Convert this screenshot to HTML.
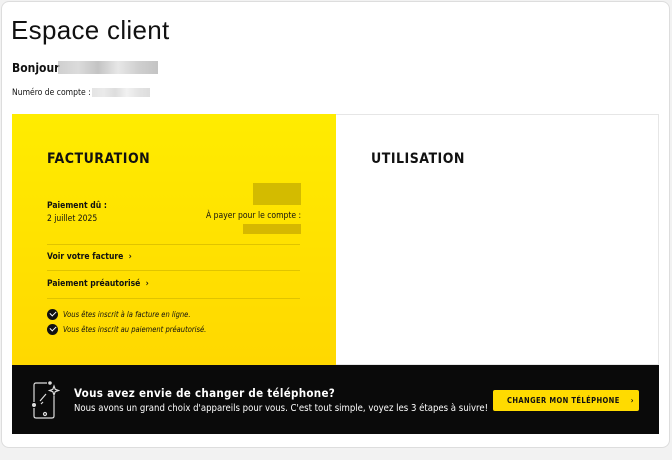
<!DOCTYPE html>
<html><head><meta charset="utf-8"><style>
*{margin:0;padding:0;box-sizing:border-box}
body{width:672px;height:460px;background:#f2f2f2;font-family:"DejaVu Sans Condensed","Liberation Sans",sans-serif;color:#111;position:relative;overflow:hidden}
.card{position:absolute;left:1px;top:1px;width:669px;height:447px;background:#fff;border:1px solid #ddd;border-radius:8px}
.abs{position:absolute}
h1{position:absolute;left:11px;top:15px;font-weight:normal;font-size:26px;font-family:"Liberation Sans",sans-serif;color:#111;letter-spacing:0.3px}
.blur{position:absolute;background:linear-gradient(90deg,#bbb,#ccc,#aaa,#ddd,#bbb,#aaa);opacity:.7}
.yel{position:absolute;left:12px;top:114px;width:324px;height:251px;background:linear-gradient(#ffec00,#ffd800)}
.wht{position:absolute;left:336px;top:114px;width:323px;height:251px;border:1px solid #e6e6e6;border-left:none}
.ttl{font-weight:bold;font-size:14px;letter-spacing:.5px}
.sm{font-size:9px}
.hr{position:absolute;left:47px;width:253px;height:1px;background:#e0c400}
.chk{position:absolute;left:47px;width:11px;height:11px;border-radius:50%;background:#111}
.chk:after{content:"";position:absolute;left:3px;top:2px;width:5px;height:3px;border-left:1.5px solid #fff;border-bottom:1.5px solid #fff;transform:rotate(-45deg)}
.it{font-style:italic;font-size:7.5px}
.ban{position:absolute;left:12px;top:365px;width:647px;height:69px;background:#0a0a0a;color:#fff}
.btn{position:absolute;left:493px;top:390px;width:146px;height:21px;background:#ffdb00;border-radius:2px;color:#111;font-size:7.5px;font-weight:bold;letter-spacing:.4px;line-height:21px;padding-left:14px}
</style></head><body>
<div class="card"></div>
<h1>Espace client</h1>
<div class="abs" style="left:12px;top:61px;font-weight:bold;font-size:12px">Bonjour</div>
<div class="blur" style="left:58px;top:61px;width:100px;height:13px"></div>
<div class="abs sm" style="left:12px;top:88px;font-size:8.5px">Numéro de compte :</div>
<div class="blur" style="left:92px;top:88px;width:58px;height:9px;opacity:.4"></div>
<div class="yel"></div>
<div class="wht"></div>
<div class="abs ttl" style="left:47px;top:151px">FACTURATION</div>
<div class="abs ttl" style="left:371px;top:151px">UTILISATION</div>
<div class="abs" style="left:47px;top:201px;font-weight:bold;font-size:8.5px">Paiement dû :</div>
<div class="abs" style="left:47px;top:214px;font-size:8.5px">2 juillet 2025</div>
<div class="abs" style="left:253px;top:183px;width:48px;height:22px;background:#b59e00;opacity:.6"></div>
<div class="abs" style="left:206px;top:211px;font-size:8.5px">À payer pour le compte :</div>
<div class="abs" style="left:243px;top:224px;width:58px;height:10px;background:#d6b800"></div>
<div class="hr" style="top:244px"></div>
<div class="abs" style="left:47px;top:252px;font-size:8.5px;font-weight:bold">Voir votre facture &nbsp;›</div>
<div class="hr" style="top:270px"></div>
<div class="abs" style="left:47px;top:279px;font-size:8.5px;font-weight:bold">Paiement préautorisé &nbsp;›</div>
<div class="hr" style="top:298px"></div>
<div class="chk" style="top:309px"></div>
<div class="abs it" style="left:63px;top:310px">Vous êtes inscrit à la facture en ligne.</div>
<div class="chk" style="top:324px"></div>
<div class="abs it" style="left:63px;top:325px">Vous êtes inscrit au paiement préautorisé.</div>
<div class="ban"></div>
<svg class="abs" style="left:30px;top:380px" width="30" height="40" viewBox="0 0 30 40" fill="none" stroke="#ddd" stroke-width="1.2">
<path d="M17 3H6Q4 3 4 5V22M4 28V36Q4 38 6 38H22Q24 38 24 36V16"/><path d="M10 21l6-7M11 24l2-2"/><circle cx="15" cy="34" r="1.5"/><circle cx="4" cy="25" r="1.4" fill="#ddd"/><circle cx="20" cy="3" r="1.2" fill="#ddd"/>
<path d="M24 6l1.2 3.3 3.3 1.2-3.3 1.2-1.2 3.3-1.2-3.3-3.3-1.2 3.3-1.2z"/></svg>
<div class="abs" style="left:74px;top:386px;color:#fff;font-size:11.5px;font-weight:bold;letter-spacing:.3px">Vous avez envie de changer de téléphone?</div>
<div class="abs" style="left:74px;top:403px;color:#fff;font-size:9.5px">Nous avons un grand choix d'appareils pour vous. C'est tout simple, voyez les 3 étapes à suivre!</div>
<div class="btn">CHANGER MON TÉLÉPHONE &nbsp;&nbsp;&nbsp;›</div>
</body></html>
